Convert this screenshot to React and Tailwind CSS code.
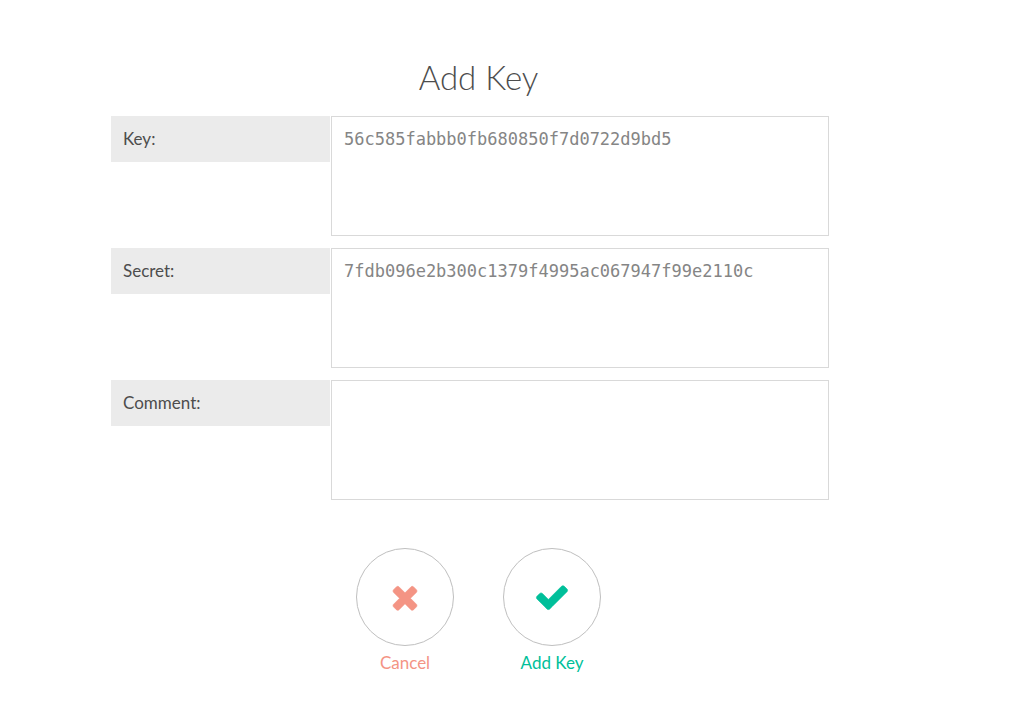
import React from "react";

const fields = [
  { id: "key", label: "Key:", value: "56c585fabbb0fb680850f7d0722d9bd5" },
  { id: "secret", label: "Secret:", value: "7fdb096e2b300c1379f4995ac067947f99e2110c" },
  { id: "comment", label: "Comment:", value: "" },
];

const crossPath =
  "M1490 1322q0 40-28 68l-136 136q-28 28-68 28t-68-28l-294-294-294 294q-28 28-68 28t-68-28l-136-136q-28-28-28-68t28-68l294-294-294-294q-28-28-28-68t28-68l136-136q28-28 68-28t68 28l294 294 294-294q28-28 68-28t68 28l136 136q28 28 28 68t-28 68l-294 294 294 294q28 28 28 68z";
const checkPath =
  "M1671 566q0 40-28 68l-724 724-136 136q-28 28-68 28t-68-28l-136-136-362-362q-28-28-28-68t28-68l136-136q28-28 68-28t68 28l294 295 656-657q28-28 68-28t68 28l136 136q28 28 28 68z";

function Field({ id, label, value }) {
  return (
    <div className="flex items-start gap-px">
      <label htmlFor={id} className="w-[219px] shrink-0 bg-[#ebebeb] p-3 text-[17px] leading-[22px] text-[#4d4d4d]">
        {label}
      </label>
      <textarea
        id={id}
        defaultValue={value}
        className="block h-[120px] min-w-0 flex-1 resize-none border border-[#d9d9d9] bg-white p-3 font-['DejaVu_Sans_Mono',monospace] text-[17px] leading-[20px] text-[#858585] outline-none"
      />
    </div>
  );
}

function ActionButton({ path, label, color }) {
  return (
    <button type="button" className={`flex cursor-pointer flex-col items-center gap-1.5 text-[17px] leading-[22px] ${color}`}>
      <span className="flex size-[98px] items-center justify-center rounded-full border border-[#bfbfbf]">
        <svg viewBox="0 0 1792 1792" className="size-9" fill="currentColor" stroke="currentColor" strokeWidth="30" aria-hidden="true">
          <path d={path} />
        </svg>
      </span>
      {label}
    </button>
  );
}

export default function App() {
  return (
    <main className="bg-white px-[111px] pt-[57px] font-['Lato',sans-serif]">
      <form className="max-w-[735px]" onSubmit={(e) => e.preventDefault()}>
        <h1 className="text-center text-[33px] leading-10 font-light text-[#4d4d4d]">Add Key</h1>
        <div className="mt-[19px] mr-[17px] flex flex-col gap-3">
          {fields.map((f) => (
            <Field key={f.id} {...f} />
          ))}
        </div>
        <div className="mt-12 flex justify-center gap-[49px]">
          <ActionButton label="Cancel" color="text-[#f49484]" path={crossPath} />
          <ActionButton label="Add Key" color="text-[#00bf9a]" path={checkPath} />
        </div>
      </form>
    </main>
  );
}
